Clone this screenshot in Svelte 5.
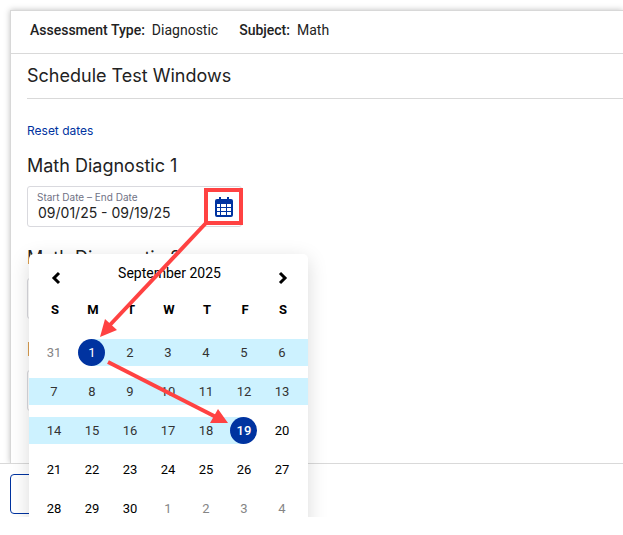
<script lang="ts">
	const weekdays = ['S', 'M', 'T', 'W', 'T', 'F', 'S'];
	const weekCount = 5;
	const daysInMonth = 30;

	let start = $state(1);
	let end = $state(19);

	let tests = $state([
		{ id: 1, range: '09/01/25 - 09/19/25' },
		{ id: 2, range: '' },
		{ id: 3, range: '' }
	]);
	let openId = $state(1);

	// offset 0 is the Sunday before the 1st
	function dayAt(offset: number) {
		const outside = offset < 1 || offset > daysInMonth;
		let label = offset;
		if (offset < 1) label = 31 + offset;
		if (offset > daysInMonth) label = offset - daysInMonth;
		return {
			offset,
			label,
			outside,
			isStart: offset === start,
			isEnd: offset === end,
			inRange: offset > start && offset < end
		};
	}

	const weeks = $derived(
		Array.from({ length: weekCount }, (_, w) => weekdays.map((_, d) => dayAt(w * 7 + d)))
	);

	function pick(offset: number) {
		if (offset < start) start = offset;
		else end = offset;
	}

	function reset() {
		start = 1;
		end = 19;
	}
</script>

<div class="screen">
	<main class="card">
		<dl class="summary">
			<div>
				<dt>Assessment Type:</dt>
				<dd>Diagnostic</dd>
			</div>
			<div>
				<dt>Subject:</dt>
				<dd>Math</dd>
			</div>
		</dl>

		<div class="content">
			<h2>Schedule Test Windows</h2>
			<a class="reset" href="#reset" onclick={reset}>Reset dates</a>

			{#each tests as test (test.id)}
				<section class="test">
					<h3>Math Diagnostic {test.id}</h3>
					<div class="field">
						<div class="field-text">
							<label for="range-{test.id}">Start Date – End Date</label>
							<input id="range-{test.id}" type="text" bind:value={test.range} />
						</div>
						<button
							class="calendar-toggle"
							aria-label="Choose dates"
							onclick={() => (openId = openId === test.id ? 0 : test.id)}
						>
							<svg width="18" height="20" viewBox="0 0 18 20" aria-hidden="true">
								<path
									fill="currentColor"
									fill-rule="evenodd"
									d="M4 0h2v2h6V0h2v2h2a2 2 0 0 1 2 2v14a2 2 0 0 1-2 2H2a2 2 0 0 1-2-2V4a2 2 0 0 1 2-2h2zM2 7v3h3V7zM6 7v3h5V7zM12 7v3h4V7zM2 11v3h3v-3zM6 11v3h5v-3zM12 11v3h4v-3zM2 15v3h3v-3zM6 15v3h5v-3zM12 15v3h4v-3z"
								/>
							</svg>
						</button>

						{#if openId === test.id}
							<div class="picker">
								<div class="picker-header">
									<button class="step" aria-label="Previous month">
										<svg width="10" height="14" viewBox="0 0 10 14" aria-hidden="true">
											<path d="M8 2 3 7l5 5" fill="none" stroke="#000" stroke-width="3" />
										</svg>
									</button>
									<span class="month">September 2025</span>
									<button class="step" aria-label="Next month">
										<svg width="10" height="14" viewBox="0 0 10 14" aria-hidden="true">
											<path d="m2 2 5 5-5 5" fill="none" stroke="#000" stroke-width="3" />
										</svg>
									</button>
								</div>
								<table>
									<thead>
										<tr>
											{#each weekdays as name}
												<th scope="col">{name}</th>
											{/each}
										</tr>
									</thead>
									<tbody>
										{#each weeks as week}
											<tr>
												{#each week as day (day.offset)}
													<td>
														<div
															class="band"
															class:band--full={day.inRange}
															class:band--start={day.isStart}
															class:band--end={day.isEnd}
														>
															<button
																class="day"
																class:day--outside={day.outside}
																class:day--range={day.inRange}
																class:day--selected={day.isStart || day.isEnd}
																class:day--end={day.isEnd}
																onclick={() => pick(day.offset)}
															>
																{day.label}
															</button>
														</div>
													</td>
												{/each}
											</tr>
										{/each}
									</tbody>
								</table>
							</div>
						{/if}
					</div>
				</section>
			{/each}
		</div>
	</main>

	<footer>
		<button class="back" aria-label="Back"></button>
	</footer>

	<!-- walkthrough callouts -->
	<svg class="callouts" width="320" height="450" viewBox="0 0 320 450" aria-hidden="true">
		<g fill="none" stroke="#ff4242" stroke-width="4">
			<rect x="206" y="190" width="35" height="33" />
			<path d="M206 223 109 326" />
			<path d="m108 362 108 55" />
		</g>
		<path fill="#ff4242" d="m100 337 5-18 12 11zM228 423l-18 0 8-14z" />
	</svg>
</div>

<style>
	:global(body) {
		margin: 0;
		background: #fff;
		color: #222;
		font-family: Roboto, 'Liberation Sans', sans-serif;
		font-size: 14px;
	}

	button,
	input {
		font: inherit;
		color: inherit;
		border: 0;
		padding: 0;
		background: none;
	}

	button {
		cursor: pointer;
	}

	.screen {
		position: relative;
		overflow: hidden;
	}

	.card {
		margin: 10px 0 0 10px;
		border: 1px solid #d8d8d8;
		border-right: 0;
		border-bottom: 0;
		box-shadow: 0 0 6px rgba(0, 0, 0, 0.25);
	}

	.summary {
		display: flex;
		gap: 21px;
		margin: 0;
		padding: 9px 19px 13px;
		border-bottom: 1px solid #d9d9d9;
		line-height: 20px;
	}
	.summary div {
		display: flex;
		gap: 7px;
	}
	.summary dt {
		font-weight: 500;
	}
	.summary dd {
		margin: 0;
	}

	.content {
		padding: 10px 0 33px 16px;
		font-family: Inter, 'Liberation Sans', sans-serif;
	}

	h2,
	h3 {
		margin: 0;
		font-size: 18px;
		font-weight: 400;
		line-height: 24px;
	}
	h2 {
		padding-bottom: 10px;
		border-bottom: 1px solid #d9d9d9;
	}

	.reset {
		display: inline-block;
		margin: 24px 0 15px;
		color: #0033a0;
		font-size: 12px;
		line-height: 16px;
		text-decoration: none;
	}

	.test {
		margin-bottom: 19px;
	}
	.test h3 {
		margin-bottom: 8px;
	}

	.field {
		position: relative;
		display: flex;
		box-sizing: border-box;
		width: 215px;
		height: 41px;
		border: 1px solid #d9d9de;
		border-radius: 3px;
	}
	.field-text {
		display: flex;
		flex: 1;
		flex-direction: column;
		min-width: 0;
		padding: 4px 0 0 9px;
	}
	.field label {
		color: #6f7285;
		font-size: 10px;
		line-height: 13px;
	}
	.field input {
		padding-left: 1px;
		outline: 0;
		line-height: 18px;
	}
	.calendar-toggle {
		display: flex;
		align-items: center;
		justify-content: center;
		width: 34px;
		color: #0033a0;
	}

	.picker {
		position: absolute;
		z-index: 2;
		top: 67px;
		left: 1px;
		width: 279px;
		padding-bottom: 12px;
		border-radius: 5px;
		background: #fff;
		box-shadow: 0 5px 20px rgba(0, 0, 0, 0.15);
		color: #000;
		font-family: Roboto, 'Liberation Sans', sans-serif;
	}
	.picker-header {
		display: flex;
		align-items: flex-start;
		justify-content: space-between;
		padding: 10px 20px 0 22px;
	}
	.month {
		line-height: 18px;
	}
	.step {
		display: flex;
		padding-top: 7px;
	}

	table {
		width: 100%;
		border-collapse: collapse;
		table-layout: fixed;
		font-size: 13px;
	}
	th,
	td {
		width: 38px;
		padding: 0;
	}
	th {
		padding-left: 2px;
		width: 36px;
		font-weight: 700;
	}
	th:first-child {
		padding-left: 8px;
	}
	th:last-child {
		padding-right: 7px;
	}
	td {
		height: 39px;
	}
	thead tr {
		height: 48px;
	}

	.band {
		display: flex;
		height: 27px;
		padding-left: 5px;
	}
	td:first-child .band {
		padding-left: 11px;
	}
	.band--full {
		background: #cdf2ff;
	}
	.band--start {
		background: linear-gradient(to right, transparent 50%, #cdf2ff 50%);
	}
	.band--end {
		background: linear-gradient(to left, transparent 50%, #cdf2ff 50%);
	}

	.day {
		box-sizing: border-box;
		width: 27px;
		height: 27px;
		padding-left: 1px;
		border-radius: 50%;
		line-height: 27px;
		text-align: center;
	}
	.day--outside {
		color: #858585;
	}
	.day--range {
		color: #333;
	}
	.day--selected {
		background: #0033a0;
		color: #fff;
	}
	.day--end {
		font-weight: 500;
	}

	footer {
		position: relative;
		z-index: 1;
		padding: 10px 10px 3px;
		border-top: 1px solid #d9d9d9;
		background: #fff;
	}
	.back {
		display: block;
		box-sizing: border-box;
		width: 80px;
		height: 40px;
		border: 1px solid #0033a0;
		border-radius: 4px;
	}

	.callouts {
		position: absolute;
		z-index: 3;
		top: 0;
		left: 0;
	}
</style>
